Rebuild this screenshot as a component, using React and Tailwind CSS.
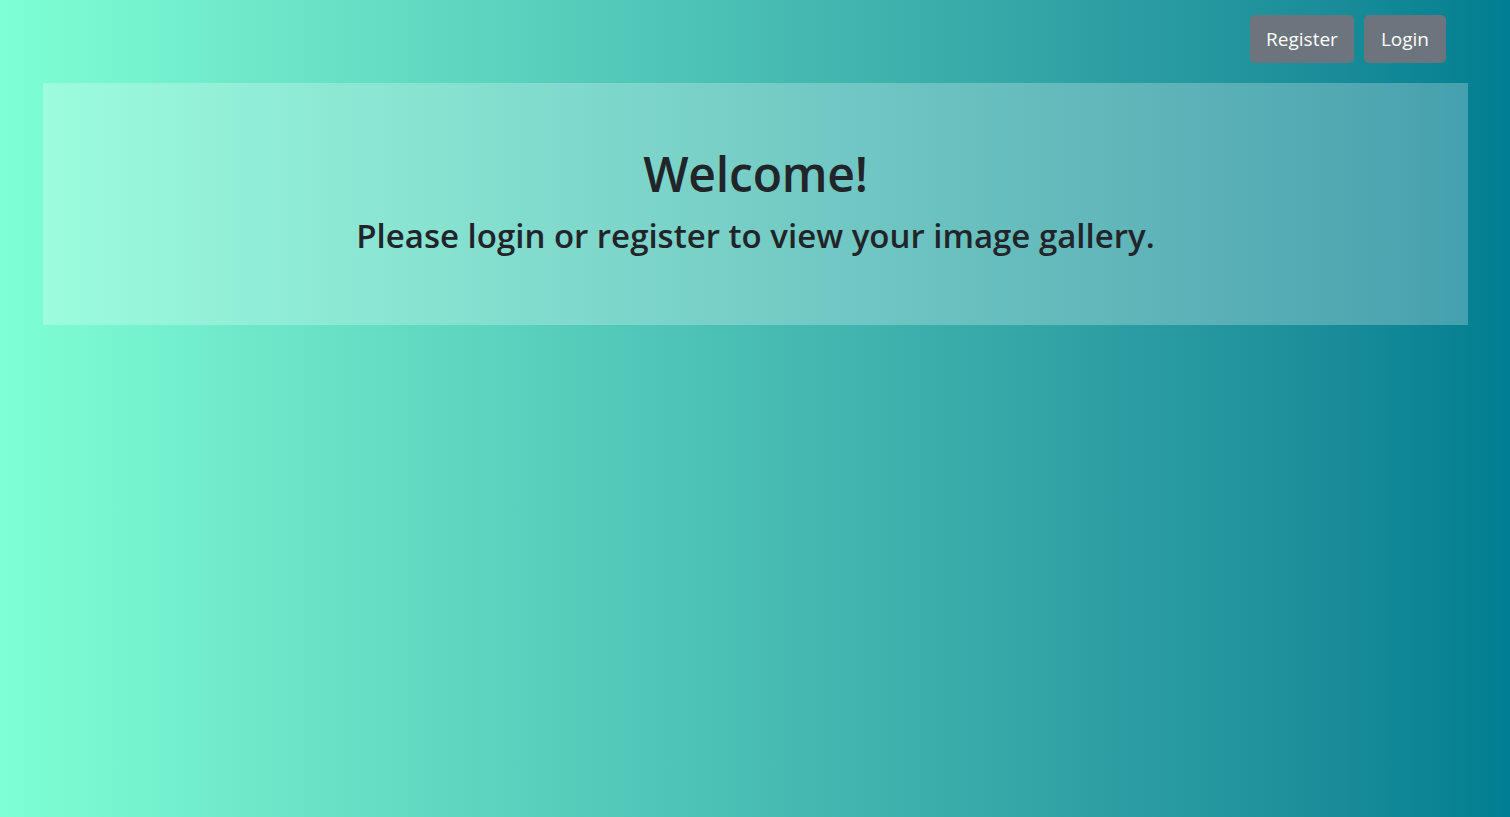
export default function App() {
  return (
    <div
      className="min-h-screen w-full bg-gradient-to-r from-[#7fffd4] to-[#007e91] text-[#212529]"
      style={{ fontFamily: '"Open Sans", "Noto Sans", sans-serif' }}
    >
      {/* Top nav */}
      <div className="flex justify-end gap-[10px] pt-[15px] pr-[64px]">
        <button className="h-[48px] px-4 rounded-[5px] bg-[#6c757d] text-white text-[19px] leading-none">
          Register
        </button>
        <button className="h-[48px] px-[17px] rounded-[5px] bg-[#6c757d] text-white text-[19px] leading-none">
          Login
        </button>
      </div>

      {/* Welcome panel */}
      <div className="ml-[43px] mr-[42px] mt-[20px] h-[242px] bg-white/25 flex flex-col items-center pt-[59px]">
        <h1 className="text-[48px] font-semibold leading-[64px] tracking-[-0.2px]">Welcome!</h1>
        <h2 className="mt-[8px] text-[33px] font-semibold leading-[44px]">
          Please login or register to view your image gallery.
        </h2>
      </div>
    </div>
  );
}
